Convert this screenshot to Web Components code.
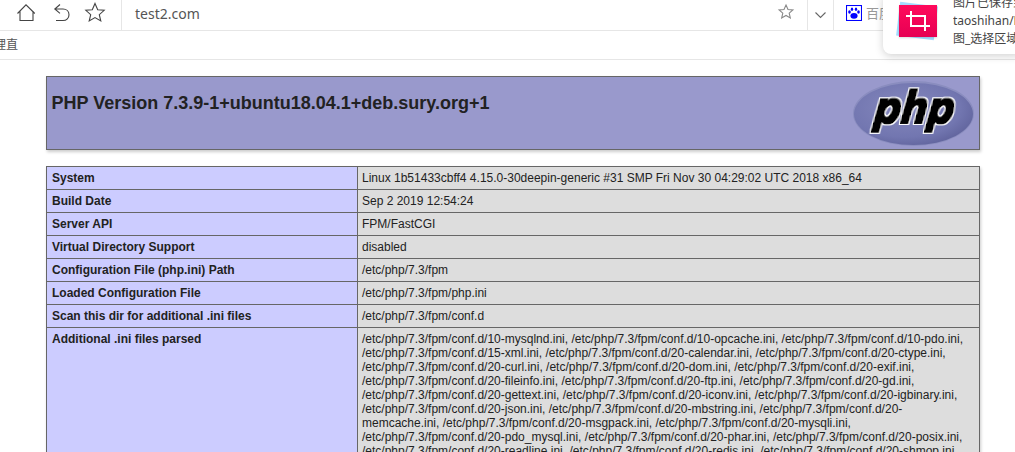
<!DOCTYPE html>
<html lang="zh">

<head>
	<meta charset="UTF-8">
	<title>phpinfo()</title>
	<style>
		html, body { margin: 0; height: 452px; overflow: hidden; background: #fff; }
		body { font-family: "Liberation Sans", Arial, sans-serif; color: #222; }
	</style>
</head>

<body>
	<browser-bar url="test2.com"></browser-bar>
	<bookmark-bar>理直</bookmark-bar>
	<save-toast>
		<span>图片已保存到</span>
		<span>taoshihan/Downloads</span>
		<span>图_选择区域_20190902</span>
	</save-toast>

	<php-page>
		<php-header version="PHP Version 7.3.9-1+ubuntu18.04.1+deb.sury.org+1"></php-header>
		<info-table>
			<info-row label="System">Linux 1b51433cbff4 4.15.0-30deepin-generic #31 SMP Fri Nov 30 04:29:02 UTC 2018 x86_64</info-row>
			<info-row label="Build Date">Sep 2 2019 12:54:24</info-row>
			<info-row label="Server API">FPM/FastCGI</info-row>
			<info-row label="Virtual Directory Support">disabled</info-row>
			<info-row label="Configuration File (php.ini) Path">/etc/php/7.3/fpm</info-row>
			<info-row label="Loaded Configuration File">/etc/php/7.3/fpm/php.ini</info-row>
			<info-row label="Scan this dir for additional .ini files">/etc/php/7.3/fpm/conf.d</info-row>
			<info-row label="Additional .ini files parsed">/etc/php/7.3/fpm/conf.d/10-mysqlnd.ini, /etc/php/7.3/fpm/conf.d/10-opcache.ini, /etc/php/7.3/fpm/conf.d/10-pdo.ini, /etc/php/7.3/fpm/conf.d/15-xml.ini, /etc/php/7.3/fpm/conf.d/20-calendar.ini, /etc/php/7.3/fpm/conf.d/20-ctype.ini, /etc/php/7.3/fpm/conf.d/20-curl.ini, /etc/php/7.3/fpm/conf.d/20-dom.ini, /etc/php/7.3/fpm/conf.d/20-exif.ini, /etc/php/7.3/fpm/conf.d/20-fileinfo.ini, /etc/php/7.3/fpm/conf.d/20-ftp.ini, /etc/php/7.3/fpm/conf.d/20-gd.ini, /etc/php/7.3/fpm/conf.d/20-gettext.ini, /etc/php/7.3/fpm/conf.d/20-iconv.ini, /etc/php/7.3/fpm/conf.d/20-igbinary.ini, /etc/php/7.3/fpm/conf.d/20-json.ini, /etc/php/7.3/fpm/conf.d/20-mbstring.ini, /etc/php/7.3/fpm/conf.d/20-memcache.ini, /etc/php/7.3/fpm/conf.d/20-msgpack.ini, /etc/php/7.3/fpm/conf.d/20-mysqli.ini, /etc/php/7.3/fpm/conf.d/20-pdo_mysql.ini, /etc/php/7.3/fpm/conf.d/20-phar.ini, /etc/php/7.3/fpm/conf.d/20-posix.ini, /etc/php/7.3/fpm/conf.d/20-readline.ini, /etc/php/7.3/fpm/conf.d/20-redis.ini, /etc/php/7.3/fpm/conf.d/20-shmop.ini,</info-row>
		</info-table>
	</php-page>

	<script>
		// 상단 주소창
		class BrowserBar extends HTMLElement {
			connectedCallback() {
				this.attachShadow({ mode: 'open' });
				this.shadowRoot.innerHTML = `
				<style>
					:host { display: flex; align-items: stretch; height: 30px; border-bottom: 1px solid #e6e6e6; background: #fff; font-family: "Noto Sans", "Noto Sans CJK SC", sans-serif; }
					svg { display: block; fill: none; stroke: #444; stroke-width: 1.1; }
					.nav { width: 121px; flex: none; border-right: 1px solid #e6e6e6; }
					.url { flex: 1; padding-left: 13px; font-size: 14px; line-height: 28px; color: #555; }
					.star { width: 42px; flex: none; }
					.cell { width: 25px; flex: none; border-left: 1px solid #e6e6e6; display: flex; align-items: center; justify-content: center; }
					.engine { width: 182px; flex: none; border-left: 1px solid #e6e6e6; display: flex; gap: 4px; padding: 5px 0 0 12px; box-sizing: border-box; font-size: 13px; line-height: 17px; color: #999; }
				</style>
				<svg class="nav" height="30" viewBox="0 0 121 30">
					<path d="M17.5 13.5L26 4.8l8.8 8.7M20 11v9.500h13V11"/>
					<path d="M60 4.500L54.800 9l5.200 4.300M55 9h8c3.600 0 6 2.500 6 5.700s-2.400 5.800-6 5.800h-7"/>
					<path d="M95 3.500l2.700 6.200 6.500.6-4.900 4.300 1.500 6.400-5.800-3.400-5.800 3.400 1.500-6.400-4.900-4.300 6.500-.6z"/>
				</svg>
				<div class="url"></div>
				<svg class="star" height="30" viewBox="0 0 42 30" style="stroke:#888">
					<path d="M21 5l2 4.500 4.900.5-3.700 3.200 1.100 4.800-4.300-2.500-4.300 2.500 1.100-4.800-3.700-3.200 4.900-.5z"/>
				</svg>
				<div class="cell">
					<svg width="13" height="8" viewBox="0 0 13 8" style="stroke:#666"><path d="M1.500 1.500L6.500 6.500l5-5"/></svg>
				</div>
				<div class="engine">
					<svg width="16" height="16" viewBox="0 0 16 16" style="flex:none;stroke:none">
						<rect x=".5" y=".5" width="15" height="15" fill="#fff" stroke="#00f"/>
						<g fill="#00f">
							<ellipse cx="8" cy="10.800" rx="3.600" ry="2.900"/>
							<ellipse cx="3.500" cy="7" rx="1.300" ry="1.700"/>
							<ellipse cx="12.500" cy="7" rx="1.300" ry="1.700"/>
							<ellipse cx="6" cy="4.200" rx="1.200" ry="1.700"/>
							<ellipse cx="10" cy="4.200" rx="1.200" ry="1.700"/>
						</g>
					</svg>
					<span>百度</span>
				</div>`;
				this.shadowRoot.querySelector('.url').textContent = this.getAttribute('url');
			}
		}
		customElements.define('browser-bar', BrowserBar);

		// 북마크 줄
		class BookmarkBar extends HTMLElement {
			connectedCallback() {
				this.attachShadow({ mode: 'open' });
				this.shadowRoot.innerHTML = `
				<style>
					:host { display: block; height: 28px; border-bottom: 1px solid #e6e6e6; overflow: hidden; background: #fff; font: 12px/26px "Noto Sans CJK SC", sans-serif; color: #555; }
					div { margin-left: -6px; }
				</style>
				<div><slot></slot></div>`;
			}
		}
		customElements.define('bookmark-bar', BookmarkBar);

		// 캡처 저장 알림 : 화면 위에 떠있음
		class SaveToast extends HTMLElement {
			connectedCallback() {
				this.attachShadow({ mode: 'open' });
				this.shadowRoot.innerHTML = `
				<style>
					:host { position: absolute; left: 883px; top: -8px; width: 140px; height: 62px; display: flex; gap: 16px; padding: 13px 0 0 16px; box-sizing: border-box; background: #fff; border-radius: 8px; box-shadow: 0 2px 8px rgba(0,0,0,.18); }
					.icon { position: relative; flex: none; width: 38px; height: 32px; }
					.back { position: absolute; left: -1px; top: -1px; width: 38px; height: 34px; background: #a5dcff; transform: rotate(7deg); }
					.front { position: absolute; inset: 0; background: linear-gradient(#ff0a5c, #e60053); box-shadow: 0 1px 2px rgba(0,0,0,.15); }
					svg { position: absolute; inset: 0; fill: none; stroke: #fff; stroke-width: 2; }
					.text { flex: none; width: 100px; margin-top: -11px; display: flex; flex-direction: column; white-space: nowrap; overflow: hidden; font: 12px/18px "Noto Sans", "Noto Sans CJK SC", sans-serif; color: #444; }
					::slotted(span) { display: block; }
				</style>
				<div class="icon">
					<div class="back"></div>
					<div class="front"></div>
					<svg width="38" height="32" viewBox="0 0 38 32"><path d="M12 6v15h19M7 11h19v15"/></svg>
				</div>
				<div class="text"><slot></slot></div>`;
			}
		}
		customElements.define('save-toast', SaveToast);

		class PhpPage extends HTMLElement {
			connectedCallback() {
				this.attachShadow({ mode: 'open' });
				this.shadowRoot.innerHTML = `
				<style>
					:host { display: flex; flex-direction: column; gap: 16px; width: 934px; margin: 16px 0 0 46px; }
				</style>
				<slot></slot>`;
			}
		}
		customElements.define('php-page', PhpPage);

		class PhpHeader extends HTMLElement {
			connectedCallback() {
				this.attachShadow({ mode: 'open' });
				this.shadowRoot.innerHTML = `
				<style>
					:host { display: flex; justify-content: space-between; height: 74px; box-sizing: border-box; padding: 4px 5px; border: 1px solid #666; background: #99c; box-shadow: 1px 2px 3px #ccc; }
					h1 { margin: 12px 0 0 -.5px; font-size: 18px; font-weight: bold; line-height: 21px; color: #222; }
					svg { display: block; flex: none; }
				</style>
				<h1></h1>
				<svg width="121" height="65" viewBox="0 0 121 65">
					<defs>
						<radialGradient id="oval" cx=".42" cy=".4" r=".68">
							<stop offset="0" stop-color="#8588bd"/>
							<stop offset=".7" stop-color="#7276b0"/>
							<stop offset="1" stop-color="#5d6099"/>
						</radialGradient>
						<!-- 글자 굵게 + 흰 테두리 -->
						<filter id="outline" x="-10%" y="-10%" width="120%" height="120%">
							<feMorphology in="SourceAlpha" operator="dilate" radius=".5" result="bold"/>
							<feMorphology in="SourceAlpha" operator="dilate" radius="1.700" result="edge"/>
							<feFlood flood-color="#fff"/>
							<feComposite in2="edge" operator="in" result="white"/>
							<feMerge>
								<feMergeNode in="white"/>
								<feMergeNode in="bold"/>
							</feMerge>
						</filter>
					</defs>
					<ellipse cx="60.500" cy="32.500" rx="60.500" ry="32.500" fill="#8a8dbf"/>
					<ellipse cx="60.500" cy="33" rx="59.500" ry="31" fill="url(#oval)"/>
					<text transform="translate(20 42) skewX(-7)" x="0" y="0" textLength="80" lengthAdjust="spacingAndGlyphs" font-family="DejaVu Sans" font-weight="bold" font-style="italic" font-size="44" fill="#000" filter="url(#outline)">php</text>
				</svg>`;
				this.shadowRoot.querySelector('h1').textContent = this.getAttribute('version');
			}
		}
		customElements.define('php-header', PhpHeader);

		class InfoTable extends HTMLElement {
			connectedCallback() {
				this.attachShadow({ mode: 'open' });
				this.shadowRoot.innerHTML = `
				<style>
					:host { display: block; border-top: 1px solid #666; box-shadow: 1px 2px 3px #ccc; }
				</style>
				<slot></slot>`;
			}
		}
		customElements.define('info-table', InfoTable);

		// label은 왼쪽 칸, 내용은 slot으로 오른쪽 칸
		class InfoRow extends HTMLElement {
			connectedCallback() {
				this.attachShadow({ mode: 'open' });
				this.shadowRoot.innerHTML = `
				<style>
					:host { display: grid; grid-template-columns: 311px 1fr; border: 1px solid #666; border-top: 0; font-size: 12px; line-height: 14px; color: #222; }
					div { padding: 4px 5px; }
					.e { background: #ccf; font-weight: bold; border-right: 1px solid #666; }
					.v { background: #ddd; padding-left: 4px; }
				</style>
				<div class="e"></div>
				<div class="v"><slot></slot></div>`;
				this.shadowRoot.querySelector('.e').textContent = this.getAttribute('label');
			}
		}
		customElements.define('info-row', InfoRow);
	</script>
</body>

</html>
